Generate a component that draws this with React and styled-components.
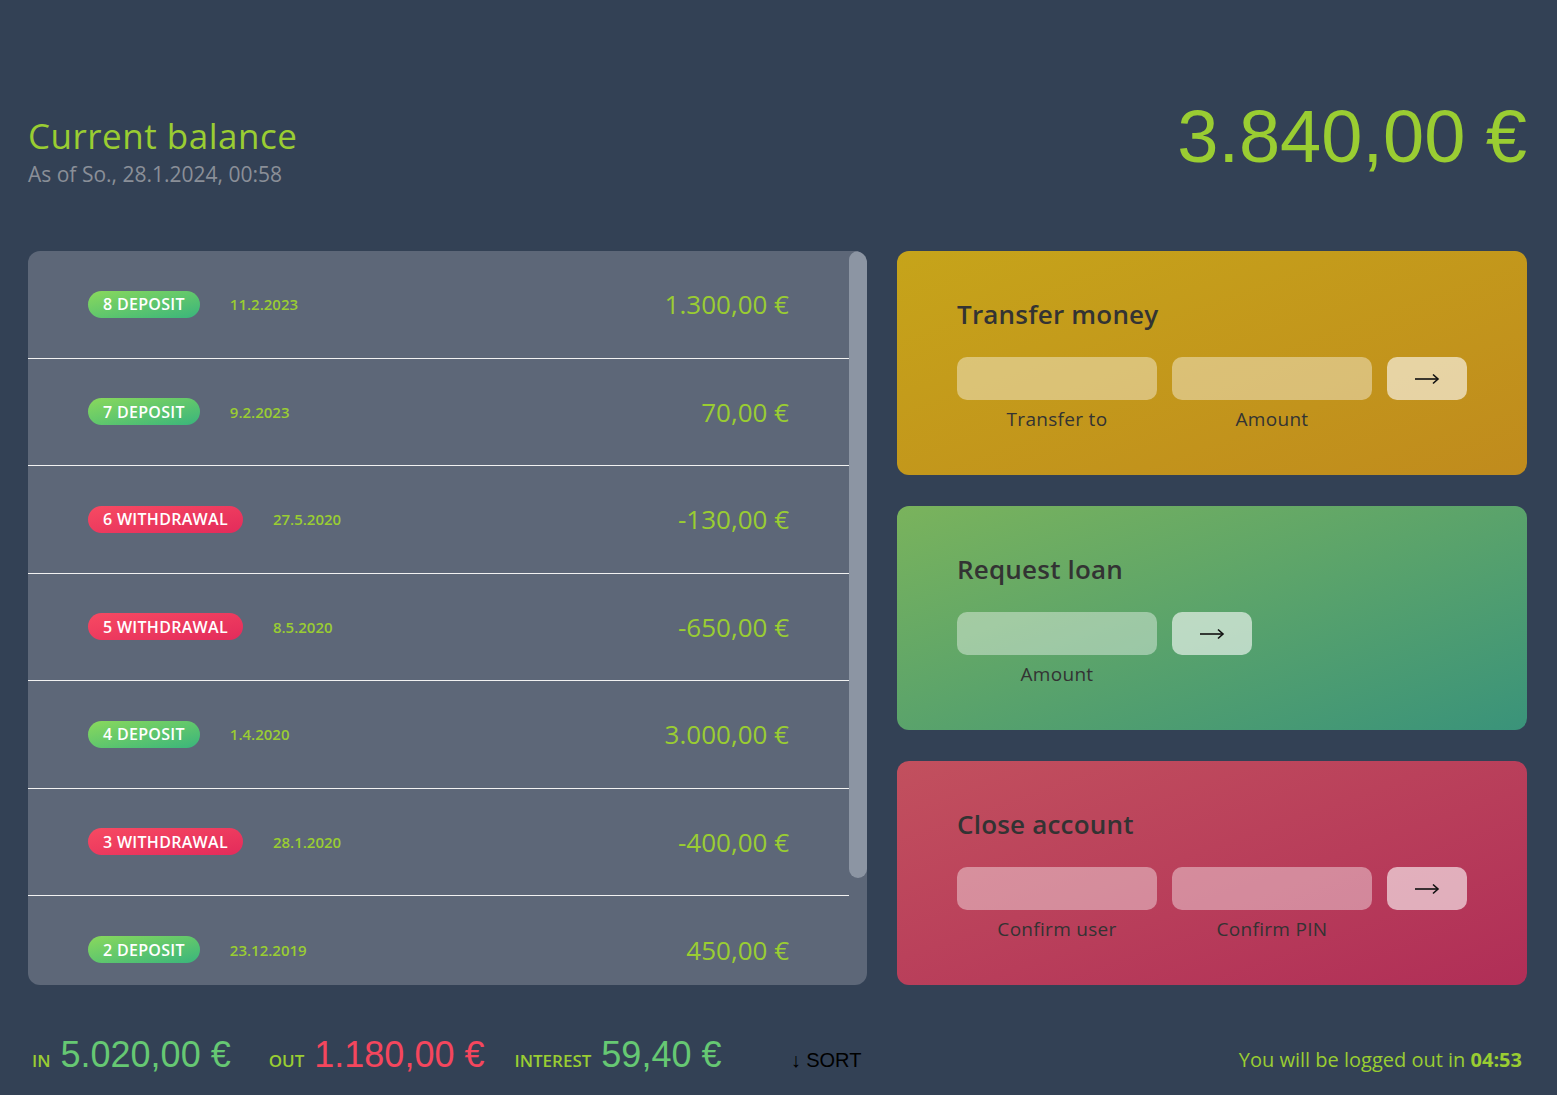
import React from 'react'
import styled, { createGlobalStyle } from 'styled-components'

const GlobalStyle = createGlobalStyle`
  * {
    box-sizing: border-box;
    margin: 0;
    padding: 0;
  }
  body {
    background-color: #334155;
    font-family: 'Open Sans', 'Noto Sans', sans-serif;
    color: #444;
  }
`

const Page = styled.main`
  width: 1499px;
  margin: 0 30px 0 28px;
  padding-bottom: 14px;
`

const Header = styled.header`
  height: 251px;
  padding-top: 100px;
  display: flex;
  justify-content: space-between;
  align-items: flex-start;
`

const LabelBlock = styled.div`
  padding-top: 16px;
`

const Title = styled.h1`
  font-size: 35px;
  line-height: 40px;
  font-weight: 500;
  letter-spacing: 0.5px;
  color: #9acd32;
`

const AsOf = styled.p`
  margin-top: 6px;
  font-size: 21px;
  line-height: 24px;
  color: #8a8f98;
`

const Balance = styled.p`
  font-family: 'Liberation Sans', Arial, sans-serif;
  font-size: 74px;
  line-height: 74px;
  color: #9acd32;
`

const Grid = styled.div`
  display: grid;
  grid-template-columns: 4fr 3fr;
  grid-template-rows: repeat(3, 224px);
  column-gap: 30px;
  row-gap: 31px;
`

const Movements = styled.div`
  grid-row: 1 / span 3;
  display: flex;
  background-color: #5d6778;
  border-radius: 12px;
  overflow: hidden;
`

const MoveList = styled.div`
  flex: 1;
  overflow: hidden;
`

const ScrollTrack = styled.div`
  width: 18px;
  flex-shrink: 0;
`

const ScrollThumb = styled.div`
  height: 627px;
  border-radius: 9px;
  background-color: #8c95a3;
`

const Row = styled.div`
  height: 107.5px;
  padding: 0 60px;
  display: flex;
  align-items: center;
  border-bottom: 1px solid #f2f2f2;

  &:last-child {
    border-bottom: none;
  }
`

const Badge = styled.span`
  height: 27px;
  padding: 0 15px;
  border-radius: 14px;
  display: inline-flex;
  align-items: center;
  font-size: 16px;
  font-weight: 600;
  letter-spacing: 0.3px;
  text-transform: uppercase;
  color: #fff;
  background-image: ${p =>
    p.type === 'deposit'
      ? 'linear-gradient(to bottom right, #8ad95c, #39b57c)'
      : 'linear-gradient(to bottom right, #f74a62, #e32b5b)'};
`

const MoveDate = styled.span`
  margin-left: 30px;
  font-size: 15px;
  font-weight: 600;
  color: #9acd32;
`

const MoveValue = styled.span`
  margin-left: auto;
  font-size: 26px;
  color: #9acd32;
`

const Operation = styled.section`
  border-radius: 12px;
  padding: 45px 60px 0;
  background-image: ${p => p.bg};
`

const OpTitle = styled.h2`
  font-size: 26px;
  line-height: 36px;
  font-weight: 600;
  letter-spacing: 0.2px;
  color: #333;
  margin-bottom: 25px;
`

const Form = styled.form`
  display: grid;
  grid-template-columns: ${p => (p.short ? '200px 80px' : '200px 200px 80px')};
  column-gap: 15px;
  row-gap: 8px;
`

const Input = styled.input`
  height: 43px;
  border: none;
  border-radius: 10px;
  background-color: rgba(255, 255, 255, 0.4);
  outline: none;
`

const Go = styled.button`
  height: 43px;
  border: none;
  border-radius: 10px;
  background-color: rgba(255, 255, 255, 0.6);
  display: flex;
  align-items: center;
  justify-content: center;
  color: #111;
`

const FieldLabel = styled.label`
  font-size: 19px;
  line-height: 22px;
  letter-spacing: 0.3px;
  text-align: center;
  color: #333;
`

const Footer = styled.footer`
  display: grid;
  grid-template-columns: 4fr 3fr;
  column-gap: 30px;
  align-items: baseline;
  margin-top: 49px;
`

const Summary = styled.div`
  display: flex;
  align-items: baseline;
  padding: 0 6px 0 4px;
`

const SumLabel = styled.span`
  font-size: 17px;
  font-weight: 600;
  text-transform: uppercase;
  color: #9acd32;
  margin-right: 10px;
`

const SumValue = styled.span`
  font-family: 'Liberation Sans', Arial, sans-serif;
  font-size: 36px;
  color: ${p => (p.out ? '#f5465d' : '#66c873')};
  margin-right: ${p => (p.out ? '30px' : '38px')};
`

const SortButton = styled.button`
  margin-left: auto;
  border: none;
  background: none;
  font-family: 'Liberation Sans', Arial, sans-serif;
  font-size: 20px;
  color: #000;
`

const Timer = styled.p`
  text-align: right;
  padding: 0 5px;
  font-size: 20px;
  font-weight: 500;
  color: #9acd32;

  strong {
    font-weight: 700;
  }
`

const Arrow = () => (
  <svg width="26" height="12" viewBox="0 0 26 12" fill="none" stroke="currentColor" strokeWidth="1.6">
    <path d="M1 6h23" />
    <path d="M19 1.5L24 6l-5 4.5" />
  </svg>
)

const movements = [
  { n: 8, type: 'deposit', date: '11.2.2023', value: '1.300,00 €' },
  { n: 7, type: 'deposit', date: '9.2.2023', value: '70,00 €' },
  { n: 6, type: 'withdrawal', date: '27.5.2020', value: '-130,00 €' },
  { n: 5, type: 'withdrawal', date: '8.5.2020', value: '-650,00 €' },
  { n: 4, type: 'deposit', date: '1.4.2020', value: '3.000,00 €' },
  { n: 3, type: 'withdrawal', date: '28.1.2020', value: '-400,00 €' },
  { n: 2, type: 'deposit', date: '23.12.2019', value: '450,00 €' },
]

export default function App() {
  return (
    <>
      <GlobalStyle />
      <Page>
        <Header>
          <LabelBlock>
            <Title>Current balance</Title>
            <AsOf>As of So., 28.1.2024, 00:58</AsOf>
          </LabelBlock>
          <Balance>3.840,00 €</Balance>
        </Header>

        <Grid>
          <Movements>
            <MoveList>
              {movements.map(m => (
                <Row key={m.n}>
                  <Badge type={m.type}>
                    {m.n} {m.type}
                  </Badge>
                  <MoveDate>{m.date}</MoveDate>
                  <MoveValue>{m.value}</MoveValue>
                </Row>
              ))}
            </MoveList>
            <ScrollTrack>
              <ScrollThumb />
            </ScrollTrack>
          </Movements>

          <Operation bg="linear-gradient(to bottom right, #c6a41a, #c08b1d)">
            <OpTitle>Transfer money</OpTitle>
            <Form>
              <Input type="text" />
              <Input type="number" />
              <Go type="button"><Arrow /></Go>
              <FieldLabel>Transfer to</FieldLabel>
              <FieldLabel>Amount</FieldLabel>
            </Form>
          </Operation>

          <Operation bg="linear-gradient(to bottom right, #7ab35c, #3a937a)">
            <OpTitle>Request loan</OpTitle>
            <Form short>
              <Input type="number" />
              <Go type="button"><Arrow /></Go>
              <FieldLabel>Amount</FieldLabel>
            </Form>
          </Operation>

          <Operation bg="linear-gradient(to bottom right, #c2505e, #b02e57)">
            <OpTitle>Close account</OpTitle>
            <Form>
              <Input type="text" />
              <Input type="password" />
              <Go type="button"><Arrow /></Go>
              <FieldLabel>Confirm user</FieldLabel>
              <FieldLabel>Confirm PIN</FieldLabel>
            </Form>
          </Operation>
        </Grid>

        <Footer>
          <Summary>
            <SumLabel>In</SumLabel>
            <SumValue>5.020,00 €</SumValue>
            <SumLabel>Out</SumLabel>
            <SumValue out>1.180,00 €</SumValue>
            <SumLabel>Interest</SumLabel>
            <SumValue>59,40 €</SumValue>
            <SortButton type="button">↓ SORT</SortButton>
          </Summary>
          <Timer>
            You will be logged out in <strong>04:53</strong>
          </Timer>
        </Footer>
      </Page>
    </>
  )
}
